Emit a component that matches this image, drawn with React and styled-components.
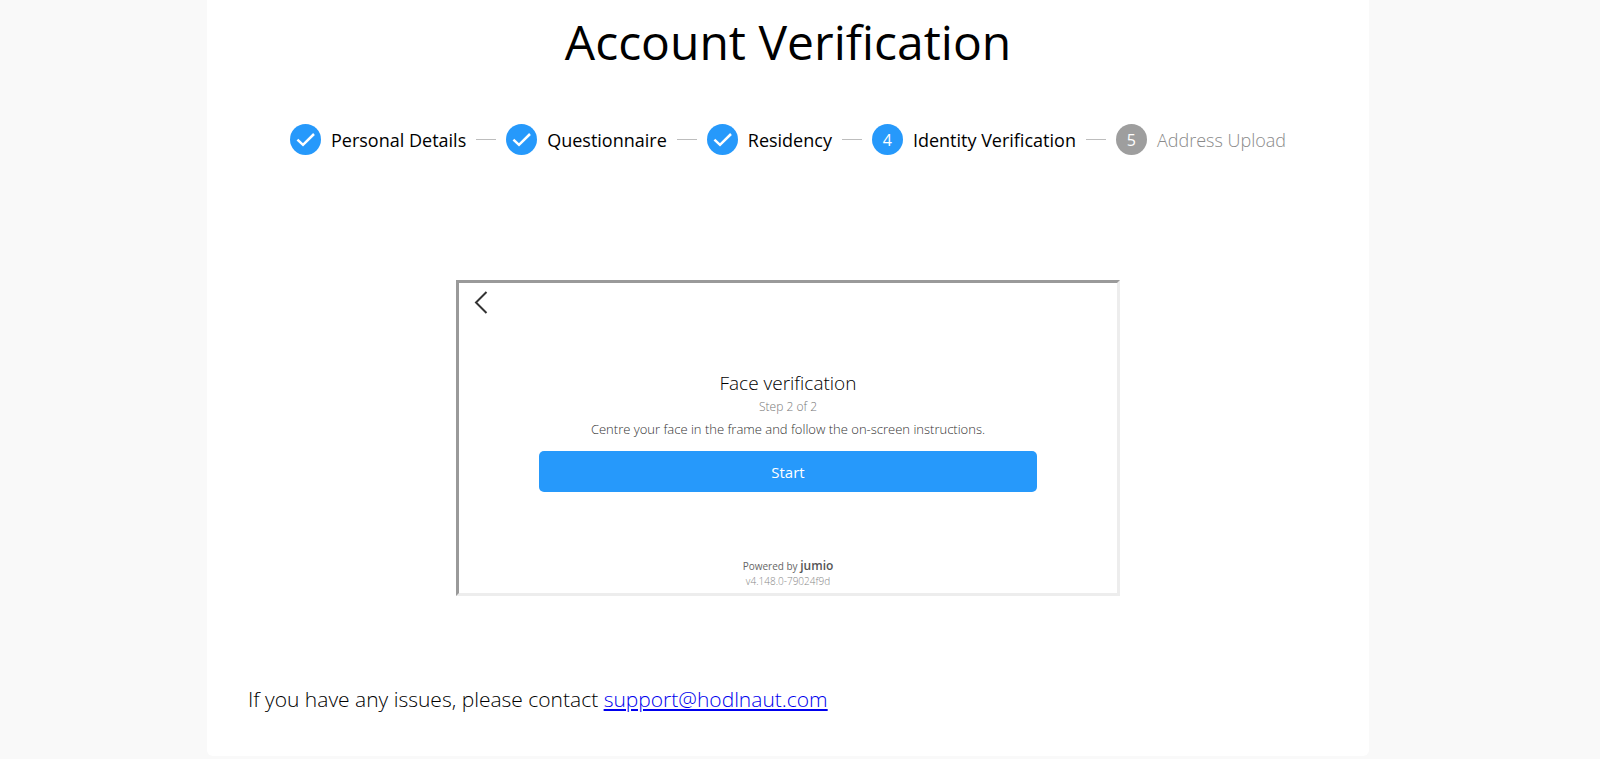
import { Fragment } from "react";
import styled, { createGlobalStyle } from "styled-components";

const steps = [
  { label: "Personal Details", status: "done" },
  { label: "Questionnaire", status: "done" },
  { label: "Residency", status: "done" },
  { label: "Identity Verification", status: "active" },
  { label: "Address Upload", status: "todo" },
];

const App = () => {
  return (
    <>
      <GlobalStyle />
      <Page>
        <Card>
          <Title>Account Verification</Title>
          <Stepper>
            {steps.map((step, index) => (
              <Fragment key={step.label}>
                {index > 0 && <Connector />}
                <Step>
                  <StepIcon $status={step.status}>
                    {step.status === "done" ? <Check /> : index + 1}
                  </StepIcon>
                  <StepLabel $status={step.status}>{step.label}</StepLabel>
                </Step>
              </Fragment>
            ))}
          </Stepper>
          <Frame>
            <BackButton aria-label="Back">
              <svg width="14" height="24" viewBox="0 0 14 24" fill="none">
                <path d="M12.5 2L2 12.5L12.5 23" stroke="#333" strokeWidth="2" />
              </svg>
            </BackButton>
            <FaceStep>
              <FaceTitle>Face verification</FaceTitle>
              <StepCount>Step 2 of 2</StepCount>
              <Instruction>
                Centre your face in the frame and follow the on-screen
                instructions.
              </Instruction>
              <StartButton>Start</StartButton>
            </FaceStep>
            <Powered>
              Powered by <Brand>jumio</Brand>
            </Powered>
            <Version>v4.148.0-79024f9d</Version>
          </Frame>
          <Support>
            If you have any issues, please contact{" "}
            <SupportLink href="mailto:support@hodlnaut.com">
              support@hodlnaut.com
            </SupportLink>
          </Support>
        </Card>
      </Page>
    </>
  );
};
export default App;

const Check = () => (
  <svg width="31" height="31" viewBox="0 0 31 31" fill="none">
    <path d="M7.4 15.6L13 20.8L24 10" stroke="#fff" strokeWidth="2.5" />
  </svg>
);

const GlobalStyle = createGlobalStyle`
  * {
    box-sizing: border-box;
  }
  body {
    margin: 0;
    background-color: #f9f9f9;
    font-family: "Open Sans", "Noto Sans", sans-serif;
  }
`;

const Page = styled.div`
  padding: 0 231px 2px 207px;
`;

const Card = styled.main`
  display: flex;
  flex-direction: column;
  align-items: center;
  padding: 10px 41px 41px;
  background-color: #fff;
  border-radius: 0 0 6px 6px;
`;

const Title = styled.h1`
  margin: 0;
  font-size: 48px;
  font-weight: 400;
  line-height: 64px;
  color: #000;
`;

const Stepper = styled.div`
  display: flex;
  align-items: center;
  gap: 10px;
  width: 100%;
  max-width: 996px;
  margin-top: 50px;
`;

const Step = styled.div`
  display: flex;
  align-items: center;
  gap: 10px;
`;

const Connector = styled.span`
  flex: 1;
  min-width: 8px;
  height: 1px;
  background-color: #bdbdbd;
`;

const StepIcon = styled.span`
  display: flex;
  align-items: center;
  justify-content: center;
  width: 31px;
  height: 31px;
  border-radius: 50%;
  font-size: 16px;
  color: #fff;
  background-color: ${(props) =>
    props.$status === "todo" ? "#9e9e9e" : "#2699fb"};
`;

const StepLabel = styled.span`
  font-size: 18px;
  font-weight: ${(props) => (props.$status === "todo" ? 300 : 400)};
  line-height: 24px;
  white-space: nowrap;
  color: ${(props) => (props.$status === "todo" ? "#8a8a8a" : "#000")};
`;

const Frame = styled.section`
  display: flex;
  flex-direction: column;
  align-items: center;
  width: 100%;
  max-width: 664px;
  margin-top: 125px;
  padding-bottom: 4px;
  border: 3px solid;
  border-color: #9a9a9a #ededed #ededed #9a9a9a;
`;

const BackButton = styled.button`
  display: flex;
  align-self: flex-start;
  margin: 7px 0 0 15px;
  padding: 0;
  border: none;
  background: none;
`;

const FaceStep = styled.div`
  display: flex;
  flex-direction: column;
  align-items: center;
  width: 100%;
  margin-top: 55px;
  padding: 0 80px;
`;

const FaceTitle = styled.h2`
  margin: 0;
  font-size: 19px;
  font-weight: 300;
  line-height: 28px;
  color: #000;
`;

const StepCount = styled.p`
  margin: 0;
  font-size: 12px;
  font-weight: 300;
  line-height: 20px;
  color: #777;
`;

const Instruction = styled.p`
  margin: 0;
  font-size: 13px;
  font-weight: 300;
  line-height: 24px;
  color: #333;
`;

const StartButton = styled.button`
  width: 100%;
  height: 41px;
  margin-top: 10px;
  border: none;
  border-radius: 5px;
  background-color: #2699fb;
  color: #fff;
  font-family: inherit;
  font-size: 15px;
`;

const Powered = styled.p`
  margin: 66px 0 0;
  font-size: 10px;
  line-height: 15px;
  color: #666;
`;

const Brand = styled.span`
  font-size: 12px;
  font-weight: 600;
  color: #555;
`;

const Version = styled.p`
  margin: 0;
  font-size: 10px;
  font-weight: 300;
  line-height: 15px;
  color: #888;
`;

const Support = styled.p`
  align-self: flex-start;
  margin: 87px 0 0;
  font-size: 21px;
  font-weight: 300;
  line-height: 32px;
  color: #000;
`;

const SupportLink = styled.a`
  color: #00e;
`;
